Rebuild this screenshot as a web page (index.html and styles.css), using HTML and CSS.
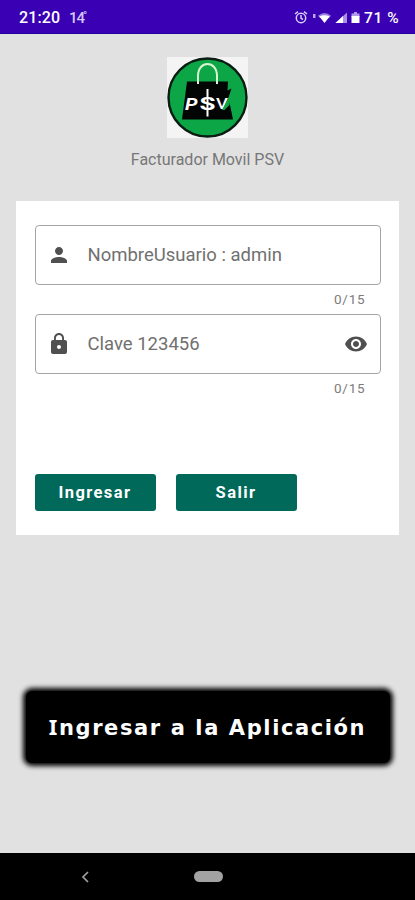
FILE: index.html
```html
<!DOCTYPE html>
<html lang="es">
<head>
<meta charset="utf-8">
<title>Facturador Movil PSV</title>
<link rel="stylesheet" href="styles.css">
</head>
<body>
<div class="screen">
  <header class="status">
    <span class="time">21:20</span>
    <span class="temp">14<sup>°</sup></span>
    <svg class="status-icons" width="68" height="18" viewBox="0 0 68 18">
      <g fill="none" stroke="#d9cff5" stroke-width="1.5">
        <circle cx="7" cy="9" r="4.700"/>
        <path d="M7 6v3.300l2 1.200M1 5l3-2.400M13 5l-3-2.400"/>
      </g>
      <path d="M19 5h2.500v4H19z" fill="#b9a5ec"/>
      <path d="M24 6.700Q30.500 1.500 37 6.700L35 9H26z" fill="#9b7fe0"/>
      <path d="M25.300 7.500Q30.500 5 35.700 7.500L30.500 14z" fill="#fff"/>
      <path d="M53 3.500V14H41.500z" fill="#a890e6"/>
      <path d="M49 7v7h-7.500z" fill="#fff"/>
      <path d="M57.500 4.500H60V3h3v1.500h2.500V8h-8z" fill="#b09ae8"/>
      <path d="M57.500 7h8v7h-8z" fill="#fff"/>
    </svg>
    <span class="battery">71 %</span>
  </header>

  <main class="content">
    <svg class="logo" width="81" height="81" viewBox="0 0 81 81">
      <rect width="81" height="81" fill="#f4f4f4"/>
      <circle cx="40.500" cy="40.500" r="39" fill="#0ca647" stroke="#0b1c12" stroke-width="2.400"/>
      <path d="M20 24.500h41l-.5 9 4-2-3 9 4.500 22H15z" fill="#030504"/>
      <path d="M31 27V19C31 3 50 3 50 19v8" fill="none" stroke="#d8f5cf" stroke-width="2"/>
      <text class="logo-text" x="18" y="53" textLength="12.500" lengthAdjust="spacingAndGlyphs">P</text>
      <text class="logo-text logo-s" x="32.500" y="52.500" textLength="16" lengthAdjust="spacingAndGlyphs">S</text>
      <path d="M40.500 32v27.500" stroke="#fff" stroke-width="2"/>
      <text class="logo-text logo-v" x="49" y="52" textLength="12" lengthAdjust="spacingAndGlyphs">V</text>
      <path d="M55 53l9-17-1.500 12-5 5z" fill="#0ca647"/>
    </svg>
    <h1 class="title">Facturador Movil PSV</h1>

    <form class="card">
      <div class="field">
        <svg class="lead" width="24" height="24" viewBox="0 0 24 24"><path d="M12 12c2.210 0 4-1.790 4-4s-1.790-4-4-4-4 1.790-4 4 1.790 4 4 4zm0 2c-2.670 0-8 1.340-8 4v2h16v-2c0-2.660-5.330-4-8-4z"/></svg>
        <span class="label">NombreUsuario : admin</span>
      </div>
      <div class="counter">0/15</div>
      <div class="field">
        <svg class="lead" width="24" height="24" viewBox="0 0 24 24"><path d="M18 8h-1V6c0-2.760-2.240-5-5-5S7 3.240 7 6v2H6c-1.100 0-2 .9-2 2v10c0 1.100.9 2 2 2h12c1.100 0 2-.9 2-2V10c0-1.100-.9-2-2-2zm-6 9c-1.100 0-2-.9-2-2s.9-2 2-2 2 .9 2 2-.9 2-2 2zm3.100-9H8.900V6c0-1.710 1.390-3.100 3.100-3.100s3.100 1.390 3.100 3.100v2z"/></svg>
        <span class="label">Clave 123456</span>
        <svg class="eye" width="24" height="24" viewBox="0 0 24 24"><path d="M12 4.500C7 4.500 2.730 7.610 1 12c1.730 4.390 6 7.500 11 7.500s9.270-3.110 11-7.500c-1.730-4.390-6-7.500-11-7.500zM12 17c-2.760 0-5-2.240-5-5s2.240-5 5-5 5 2.240 5 5-2.240 5-5 5zm0-8c-1.660 0-3 1.340-3 3s1.340 3 3 3 3-1.340 3-3-1.340-3-3-3z"/></svg>
      </div>
      <div class="counter">0/15</div>
      <div class="actions">
        <button type="button" class="btn">Ingresar</button>
        <button type="button" class="btn">Salir</button>
      </div>
    </form>

    <div class="caption"><span><span class="initial">I</span>ngresar a la Aplicación</span></div>
  </main>

  <nav class="navbar">
    <svg class="back" width="10" height="14" viewBox="0 0 10 14"><path d="M8 2L3 7l5 5" fill="none" stroke="#a0a0a0" stroke-width="1.700"/></svg>
    <span class="home"></span>
  </nav>
</div>
</body>
</html>
```
FILE: styles.css
```css
* { box-sizing: border-box; }

body {
  margin: 0;
  font-family: Roboto, sans-serif;
  background: #e1e1e1;
}

.screen {
  width: 415px;
  height: 900px;
  display: flex;
  flex-direction: column;
  overflow: hidden;
}

.status {
  height: 34px;
  flex: none;
  display: flex;
  align-items: center;
  padding: 2px 15px 0 19px;
  background: #3a00b3;
  border-bottom: 1px solid #2200a0;
  color: #fff;
  font-size: 16px;
  font-weight: 500;
  white-space: nowrap;
}

.time { width: 50px; letter-spacing: 0.1px; }

.temp {
  color: #d5c8f5;
  font-size: 15px;
  letter-spacing: -1px;
}

.temp sup { font-size: 11px; line-height: 0; vertical-align: 4px; margin-left: -1px; }

.status-icons { margin-left: auto; }

.battery { width: 36px; margin-left: 2px; font-size: 15.5px; letter-spacing: 0.6px; }

.content {
  flex: 1;
  display: flex;
  flex-direction: column;
  align-items: center;
  padding-top: 23px;
}

.logo { flex: none; display: block; }

.logo-text {
  font: italic 700 17px Roboto, sans-serif;
  fill: #fff;
}

.logo-s { font-style: normal; font-size: 18px; }

.logo-v { font-style: normal; font-weight: 500; font-size: 15px; }

.title {
  margin: 12px 0 0;
  height: 20px;
  line-height: 20px;
  font-size: 16px;
  font-weight: 400;
  color: #777;
}

.card {
  width: 383px;
  height: 334px;
  flex: none;
  margin-top: 31px;
  padding: 24px 18.5px 0;
  background: #fff;
}

.field {
  height: 60px;
  display: flex;
  align-items: center;
  padding: 0 12px;
  border: 1px solid #a5a5a5;
  border-radius: 4px;
}

.lead, .eye { fill: #505050; flex: none; }

.lead { margin: 0 17px 0 -1px; }

.eye { margin-left: auto; }

.label {
  font-size: 18.5px;
  font-weight: 400;
  color: #707070;
  white-space: nowrap;
}

.counter {
  height: 29px;
  line-height: 29px;
  padding-right: 15px;
  text-align: right;
  font-size: 13.5px;
  letter-spacing: 0.8px;
  color: #7c7c7c;
}

.actions {
  display: flex;
  gap: 20px;
  margin-top: 71px;
}

.btn {
  width: 121px;
  height: 37px;
  padding: 0;
  border: 0;
  border-radius: 3px;
  background: #00695a;
  color: #fff;
  font: 700 16.5px Roboto, sans-serif;
  letter-spacing: 1.4px;
}

.caption {
  width: 364px;
  height: 72px;
  flex: none;
  margin-top: 156px;
  display: flex;
  align-items: center;
  justify-content: center;
  border-radius: 6px;
  background: #000;
  box-shadow: 0 0 5px 3px #000;
  color: #fff;
  font: 700 21px "DejaVu Sans", sans-serif;
  letter-spacing: 1.6px;
  white-space: nowrap;
}

.initial { font-family: "Noto Sans", sans-serif; font-size: 22px; line-height: 1; }

.navbar {
  height: 47px;
  flex: none;
  display: flex;
  align-items: center;
  padding-left: 80px;
  background: #000;
}

.home {
  width: 29px;
  height: 11px;
  margin-left: 104px;
  border-radius: 6px;
  background: #a2a2a2;
}
```
